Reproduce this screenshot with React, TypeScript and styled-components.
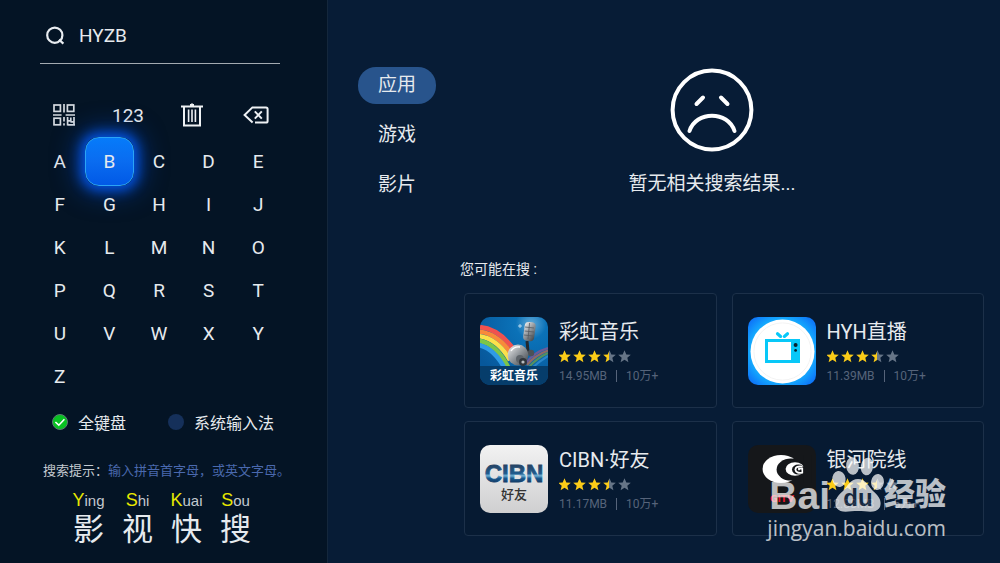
import React, { useState } from 'react';
import styled, { createGlobalStyle, css } from 'styled-components';

const latin = `Roboto, 'Noto Sans CJK SC', sans-serif`;

const letters = 'ABCDEFGHIJKLMNOPQRSTUVWXYZ'.split('');
const tabs = ['应用', '游戏', '影片'];
const brand = [
	{ head: 'Y', tail: 'ing', word: '影' },
	{ head: 'S', tail: 'hi', word: '视' },
	{ head: 'K', tail: 'uai', word: '快' },
	{ head: 'S', tail: 'ou', word: '搜' },
];
const apps = [
	{ title: '彩虹音乐', size: '14.95MB', count: '10万+', icon: <RainbowIcon /> },
	{ title: 'HYH直播', size: '11.39MB', count: '10万+', icon: <TvIcon /> },
	{ title: 'CIBN·好友', size: '11.17MB', count: '10万+', icon: <CibnIcon /> },
	{ title: '银河院线', size: '12.88MB', count: '5万+', icon: <GitvIcon /> },
];

function App() {
	const [keyword, setKeyword] = useState('HYZB');
	const [focused, setFocused] = useState('B');
	const [mode, setMode] = useState('full');
	const [tab, setTab] = useState(tabs[0]);

	const press = (letter: string) => {
		setFocused(letter);
		setKeyword(keyword + letter);
	};

	return (
		<Page>
			<GlobalStyle />
			<Sidebar>
				<SearchBox>
					<SearchIcon />
					<SearchInput
						aria-label="搜索"
						value={keyword}
						onChange={(e) => setKeyword(e.target.value)}
					/>
				</SearchBox>
				<Tools>
					<Tool aria-label="二维码">
						<QrIcon />
					</Tool>
					<Tool>123</Tool>
					<Tool aria-label="清空" onClick={() => setKeyword('')}>
						<TrashIcon />
					</Tool>
					<Tool aria-label="删除" onClick={() => setKeyword(keyword.slice(0, -1))}>
						<BackspaceIcon />
					</Tool>
				</Tools>
				<Keyboard>
					{letters.map((letter) => (
						<Key key={letter} $active={letter === focused} onClick={() => press(letter)}>
							<span>{letter}</span>
						</Key>
					))}
				</Keyboard>
				<Modes>
					<Mode>
						<Radio
							type="radio"
							name="mode"
							checked={mode === 'full'}
							onChange={() => setMode('full')}
						/>
						{mode === 'full' && <Tick />}
						全键盘
					</Mode>
					<Mode>
						<Radio
							type="radio"
							name="mode"
							checked={mode === 'system'}
							onChange={() => setMode('system')}
						/>
						{mode === 'system' && <Tick />}
						系统输入法
					</Mode>
				</Modes>
				<Hint>
					搜索提示：<em>输入拼音首字母，或英文字母。</em>
				</Hint>
				<Brand>
					{brand.map((item) => (
						<div key={item.word}>
							<Pinyin>
								<b>{item.head}</b>
								{item.tail}
							</Pinyin>
							<Word>{item.word}</Word>
						</div>
					))}
				</Brand>
			</Sidebar>
			<Main>
				<Nav>
					{tabs.map((name) => (
						<Tab key={name} $active={name === tab} onClick={() => setTab(name)}>
							{name}
						</Tab>
					))}
				</Nav>
				<Content>
					<Empty>
						<SadFace />
						<p>暂无相关搜索结果...</p>
					</Empty>
					<Suggest>
						<SuggestTitle>您可能在搜 :</SuggestTitle>
						<Cards>
							{apps.map((app) => (
								<Card key={app.title} href="#">
									{app.icon}
									<Info>
										<Title>{app.title}</Title>
										<Stars />
										<Meta>
											<span>{app.size}</span>
											<span>{app.count}</span>
										</Meta>
									</Info>
								</Card>
							))}
						</Cards>
					</Suggest>
				</Content>
			</Main>
			<Watermark>
				<WatermarkLogo>
					<span>Bai</span>
					<Paw />
					<strong>经验</strong>
				</WatermarkLogo>
				<WatermarkUrl>jingyan.baidu.com</WatermarkUrl>
			</Watermark>
		</Page>
	);
}

function SearchIcon() {
	return (
		<svg width="20" height="20" viewBox="0 0 20 20" fill="none" stroke="#e8ecf0" strokeWidth="2.2">
			<circle cx="8.8" cy="9.2" r="7.6" />
			<path d="M13 13.6L17.4 17.6" />
		</svg>
	);
}

function QrIcon() {
	return (
		<svg width="22" height="22" viewBox="0 0 22 22" fill="none" stroke="#d5dae0" strokeWidth="1.7">
			<rect x="1" y="1" width="6.4" height="6.4" />
			<rect x="14.4" y="1" width="6.4" height="6.4" />
			<rect x="1" y="14.2" width="6.4" height="6.6" />
			<path d="M11 0V8.6M0 11H8.6M12.6 11H22M11 13V17.4M11 19.2V21.4M14.6 13V21.4M14.6 16.8H17.8V13.4M21 13V21.6M14.6 20.8H22M17.4 17.8H21" />
		</svg>
	);
}

function TrashIcon() {
	return (
		<svg width="22" height="24" viewBox="0 0 22 24" fill="none" stroke="#eef1f4" strokeWidth="2">
			<path d="M0 3.6H22M9 2H13M11 0.4V3M3 4V22.4H19V4" />
			<path d="M7.6 6.6V19M11 6.6V19M14.4 6.6V19" strokeWidth="1.6" />
		</svg>
	);
}

function BackspaceIcon() {
	return (
		<svg width="26" height="18" viewBox="0 0 26 18" fill="none" stroke="#eef1f4" strokeWidth="2">
			<path d="M9.6 16.4L1.6 9L9.4 1.4H23Q24.6 1.4 24.6 3V15Q24.6 16.6 23 16.6H12" />
			<path d="M11.8 5.4L18.8 12.6M18.8 5.4L11.8 12.6" />
		</svg>
	);
}

function Tick() {
	return (
		<TickMark viewBox="0 0 16 16" fill="none" stroke="#fff" strokeWidth="1.6">
			<path d="M3.4 8L6.8 11.2L12.4 5.2" />
		</TickMark>
	);
}

function SadFace() {
	return (
		<svg width="84" height="84" viewBox="0 0 84 84" fill="none" stroke="#fff" strokeWidth="4" strokeLinecap="round">
			<circle cx="42" cy="42" r="39.4" />
			<path d="M26.5 36L33 29.5M51 29.5L57.5 36M19.5 63C26 42.5 58 42.5 64.5 63" />
		</svg>
	);
}

const star = 'M6.5 0.2L8.3 4.5L12.8 4.8L9.3 7.8L10.4 12.2L6.5 9.8L2.6 12.2L3.7 7.8L0.2 4.8L4.7 4.5Z';

function Stars() {
	return (
		<svg width="73" height="20" viewBox="1 -4 73 20" role="img" aria-label="3.5">
			<defs>
				<linearGradient id="half">
					<stop offset="0.5" stopColor="#fbcc18" />
					<stop offset="0.5" stopColor="#667587" />
				</linearGradient>
			</defs>
			{[0, 1, 2, 3, 4].map((i) => (
				<path
					key={i}
					d={star}
					transform={`translate(${i * 15} 0)`}
					fill={i < 3 ? '#fbcc18' : i === 3 ? 'url(#half)' : '#667587'}
				/>
			))}
		</svg>
	);
}

function RainbowIcon() {
	return (
		<AppIcon viewBox="0 0 68 68">
			<defs>
				<radialGradient id="sky" cx="0.75" cy="0.1" r="0.9">
					<stop offset="0" stopColor="#5fa9d8" />
					<stop offset="0.25" stopColor="#0b72b8" />
					<stop offset="1" stopColor="#07589b" />
				</radialGradient>
				<linearGradient id="metal" x1="0" y1="0" x2="1" y2="1">
					<stop offset="0" stopColor="#f4f4f4" />
					<stop offset="0.5" stopColor="#8f9499" />
					<stop offset="1" stopColor="#3a3f45" />
				</linearGradient>
			</defs>
			<rect width="68" height="68" fill="url(#sky)" />
			<g fill="none" strokeWidth="4.6">
				<path d="M-2 10Q20 11 36 36" stroke="#f0524f" />
				<path d="M-2 14.5Q18 16 32 38" stroke="#f98a3a" />
				<path d="M-2 19Q17 21 30 43" stroke="#fbe14a" />
				<path d="M-2 23.5Q16 26 28 50" stroke="#7cc648" />
				<path d="M-2 28Q14 31 25 52" stroke="#2f9be6" />
			</g>
			<g fill="none" strokeWidth="2.2">
				<path d="M46 46Q54 35 68 31" stroke="#6c5a98" />
				<path d="M47 48Q55 38 68 33.5" stroke="#8f6a66" />
				<path d="M49 50Q57 41 68 36" stroke="#55905f" />
				<path d="M52 51Q60 44 68 39" stroke="#2b86c8" />
			</g>
			<path d="M47 24L48 34L44 42" stroke="#23282e" strokeWidth="3" fill="none" />
			<circle cx="51" cy="36" r="3.2" fill="#4b5157" />
			<rect x="44" y="5" width="11" height="19" rx="4" fill="url(#metal)" transform="rotate(8 49 14)" />
			<path d="M45 10L54 11M44.6 14L54 15M44 18L53 19M49.6 6L48 22" stroke="#555b61" strokeWidth="0.8" />
			<circle cx="38" cy="38" r="10.4" fill="url(#metal)" />
			<path d="M31 34Q34 29 40 30" stroke="#fff" strokeWidth="1.4" fill="none" />
			<circle cx="40" cy="42" r="4" fill="#5d6369" />
			<circle cx="43" cy="45" r="4" fill="#30353b" />
			<circle cx="43" cy="45" r="1.6" fill="#b8bcc0" />
			<path d="M40 7V11M38 9H42" stroke="#d8ecf8" strokeWidth="0.8" />
			<rect y="49" width="68" height="19" fill="#063d6b" />
			<text x="34" y="63" textAnchor="middle" fontSize="12" fontWeight="700" fill="#fff">
				彩虹音乐
			</text>
		</AppIcon>
	);
}

function TvIcon() {
	return (
		<AppIcon viewBox="0 0 68 68">
			<defs>
				<radialGradient id="tv" r="0.7">
					<stop offset="0.6" stopColor="#16b8ff" />
					<stop offset="1" stopColor="#0b62f6" />
				</radialGradient>
			</defs>
			<rect width="68" height="68" fill="url(#tv)" />
			<circle cx="34.5" cy="34.5" r="32" fill="#fff" />
			<circle cx="34.5" cy="34.5" r="28.6" fill="none" stroke="#f3f3f3" />
			<path d="M29.5 16.8L32.6 19.4M39.5 16.8L36.4 19.4" stroke="#08c8f8" strokeWidth="3.2" fill="none" strokeLinecap="round" />
			<rect x="17" y="22" width="35" height="24" fill="#08c8f8" />
			<rect x="20" y="25" width="23" height="18" fill="#fff" />
			<circle cx="47.6" cy="28" r="2" fill="#06222e" />
			<circle cx="47.6" cy="33.4" r="1.4" fill="#06222e" />
		</AppIcon>
	);
}

function CibnIcon() {
	return (
		<AppIcon viewBox="0 0 68 68">
			<defs>
				<linearGradient id="silver" x1="0" y1="0" x2="0" y2="1">
					<stop offset="0" stopColor="#f2f2f2" />
					<stop offset="1" stopColor="#cfcfd0" />
				</linearGradient>
				<linearGradient id="cibn" gradientUnits="userSpaceOnUse" x1="0" y1="19" x2="0" y2="38">
					<stop offset="0" stopColor="#27405f" />
					<stop offset="0.5" stopColor="#1f5b8d" />
					<stop offset="0.62" stopColor="#6fb0d4" />
					<stop offset="0.75" stopColor="#17598f" />
					<stop offset="1" stopColor="#15365f" />
				</linearGradient>
			</defs>
			<rect width="68" height="68" fill="url(#silver)" />
			<text
				x="34"
				y="37"
				textAnchor="middle"
				fontSize="24"
				fontFamily="'Liberation Sans', sans-serif"
				fontWeight="700"
				fill="url(#cibn)"
				stroke="url(#cibn)"
				strokeWidth="0.8"
			>
				CIBN
			</text>
			<text x="34" y="54" textAnchor="middle" fontSize="13" fontWeight="500" fill="#333">
				好友
			</text>
		</AppIcon>
	);
}

function GitvIcon() {
	return (
		<AppIcon viewBox="0 0 68 68">
			<rect width="68" height="68" fill="#15171a" />
			<ellipse cx="33" cy="24" rx="18.4" ry="14" fill="#fff" />
			<ellipse cx="43" cy="24.6" rx="14.4" ry="11" fill="#15171a" />
			<ellipse cx="47" cy="24" rx="9.4" ry="6.8" fill="#fff" />
			<ellipse cx="50.4" cy="24.6" rx="6.4" ry="5" fill="#15171a" />
			<path d="M54.6 21.6Q47.6 20.6 47.4 24.6Q48 28.6 54.4 27.6V23.6H51V25.2" fill="none" stroke="#fff" strokeWidth="1.8" />
			<rect x="55.4" y="10" width="8" height="28" fill="#15171a" />
			<text x="34" y="57" textAnchor="middle" fontSize="9" fontFamily="'DejaVu Sans', sans-serif" fontWeight="700" fill="#e8122c">
				GITV
			</text>
		</AppIcon>
	);
}

function Paw() {
	return (
		<svg width="54" height="58" viewBox="0 0 54 58">
			<g fill="#fff">
				<ellipse cx="9" cy="23" rx="6.6" ry="8" transform="rotate(-8 9 23)" />
				<ellipse cx="22.5" cy="10" rx="6.4" ry="8.8" transform="rotate(-6 22.5 10)" />
				<ellipse cx="37" cy="10.5" rx="6.2" ry="8.8" transform="rotate(10 37 10.5)" />
				<ellipse cx="47.5" cy="26" rx="6.4" ry="8" transform="rotate(8 47.5 26)" />
				<path d="M28 23C36 23 38 30 43 35C49 40 52 45 50 51C46 58 38 55 28 55C18 55 10 58 6 51C4 45 7 40 13 35C18 30 20 23 28 23Z" />
			</g>
			<text x="28" y="50" textAnchor="middle" fontSize="24" fontFamily="'Liberation Sans', sans-serif" fontWeight="700" fill="#1a2c44">
				du
			</text>
		</svg>
	);
}

const GlobalStyle = createGlobalStyle`
	* {
		box-sizing: border-box;
	}
	body {
		margin: 0;
		background: #071c36;
		color: #e6eaee;
		font-family: ${latin};
	}
	button,
	input {
		border: 0;
		padding: 0;
		background: none;
		color: inherit;
		font: inherit;
		outline: none;
	}
	button {
		cursor: pointer;
	}
	p {
		margin: 0;
	}
	svg {
		display: block;
		flex-shrink: 0;
	}
`;

const Page = styled.div`
	position: relative;
	display: grid;
	grid-template-columns: 328px 1fr;
	min-height: 100vh;
`;

const Sidebar = styled.aside`
	padding: 8px 40px 16px 36px;
	background: #041425;
	border-right: 1px solid #14273c;
`;

const SearchBox = styled.div`
	display: flex;
	align-items: center;
	gap: 13px;
	height: 56px;
	margin: 0 7px 28px 4px;
	padding-left: 6px;
	border-bottom: 1px solid #a3aab1;
`;

const SearchInput = styled.input`
	flex: 1;
	min-width: 0;
	font-size: 19px;
`;

const Tools = styled.div`
	display: grid;
	grid-template-columns: repeat(4, 64px);
	height: 46px;
	margin: 0 -4px 2px;
`;

const Tool = styled.button`
	display: flex;
	align-items: center;
	justify-content: center;
	font-size: 19px;
`;

const Keyboard = styled.div`
	display: grid;
	grid-template-columns: repeat(5, 1fr);
	grid-auto-rows: 43px;
	margin: 0 4px 1px -1px;
`;

const Key = styled.button<{ $active: boolean }>`
	position: relative;
	font-size: 19px;
	& > span {
		position: relative;
	}
	${(props) =>
		props.$active &&
		css`
			&::before {
				content: '';
				position: absolute;
				inset: -3px 0;
				border: 1px solid #2ba4f5;
				border-radius: 14px;
				background: linear-gradient(#067bfa, #0a6cf0 50%, #0159e6);
				box-shadow: 0 0 12px 4px #0352e0, 0 0 24px 8px rgba(3, 80, 216, 0.5);
			}
		`}
`;

const Modes = styled.div`
	display: grid;
	grid-template-columns: 116px 1fr;
	height: 46px;
	padding-left: 16px;
`;

const Mode = styled.label`
	position: relative;
	display: flex;
	align-items: center;
	gap: 10px;
	font-size: 16px;
	white-space: nowrap;
`;

const Radio = styled.input`
	appearance: none;
	width: 16px;
	height: 16px;
	margin: 0;
	border-radius: 50%;
	background: #15305a;
	&:checked {
		border: 1px solid #5d7a72;
		background: #08c222;
	}
`;

const TickMark = styled.svg`
	position: absolute;
	left: 0;
	width: 16px;
	height: 16px;
`;

const Hint = styled.p`
	margin: 16px 0 0 7px;
	font-size: 13px;
	line-height: 20px;
	white-space: nowrap;
	color: #c3c9d0;
	em {
		font-style: normal;
		color: #4a69ae;
	}
`;

const Brand = styled.div`
	display: grid;
	grid-template-columns: repeat(4, 49px);
	margin: 8px 0 0 28px;
	text-align: center;
`;

const Pinyin = styled.div`
	font-family: 'Liberation Sans', sans-serif;
	font-size: 15px;
	line-height: 22px;
	color: #c3c9d0;
	b {
		font-size: 18px;
		font-weight: 400;
		color: #e8e800;
	}
`;

const Word = styled.div`
	font-size: 31px;
	line-height: 36px;
`;

const Main = styled.main`
	display: flex;
	gap: 4px;
	padding: 67px 16px 24px 30px;
`;

const Nav = styled.nav`
	display: flex;
	flex-direction: column;
	gap: 13px;
`;

const Tab = styled.button<{ $active: boolean }>`
	width: 78px;
	height: 37px;
	padding-bottom: 6px;
	border-radius: 18px;
	font-size: 19px;
	background: ${(props) => (props.$active ? '#28548c' : 'none')};
`;

const Content = styled.div`
	flex: 1;
	min-width: 0;
`;

const Empty = styled.div`
	display: flex;
	flex-direction: column;
	align-items: center;
	gap: 18px;
	padding-top: 1px;
	font-size: 19px;
	line-height: 28px;
`;

const Suggest = styled.section`
	padding: 61px 0 0 20px;
`;

const SuggestTitle = styled.p`
	font-size: 14px;
	line-height: 20px;
	margin-bottom: 14px;
`;

const Cards = styled.div`
	display: grid;
	grid-template-columns: 1fr 1fr;
	gap: 13px 15px;
	padding-left: 4px;
`;

const Card = styled.a`
	display: flex;
	align-items: center;
	gap: 11px;
	height: 115px;
	padding: 0 15px;
	border: 1px solid #1c3049;
	border-radius: 4px;
	background: #061a32;
	color: inherit;
	text-decoration: none;
`;

const AppIcon = styled.svg`
	width: 68px;
	height: 68px;
	border-radius: 10px;
`;

const Info = styled.div`
	padding-top: 2px;
`;

const Title = styled.div`
	font-size: 20px;
	line-height: 28px;
`;

const Meta = styled.div`
	display: flex;
	align-items: center;
	font-size: 12px;
	line-height: 20px;
	color: #56647a;
	span + span {
		margin-left: 9px;
		padding-left: 9px;
		border-left: 1px solid #56647a;
		line-height: 12px;
	}
`;

const Watermark = styled.div`
	position: absolute;
	right: 54px;
	bottom: 22px;
	color: #fff;
	opacity: 0.72;
	pointer-events: none;
`;

const WatermarkLogo = styled.div`
	display: flex;
	align-items: flex-end;
	justify-content: flex-end;
	font-family: 'Liberation Sans', 'Noto Sans CJK SC', sans-serif;
	font-weight: 700;
	span {
		font-size: 39px;
		line-height: 37px;
	}
	strong {
		font-size: 31px;
		line-height: 38px;
	}
`;

const WatermarkUrl = styled.div`
	font-family: 'Open Sans', 'Noto Sans', sans-serif;
	font-size: 21px;
	font-weight: 500;
	line-height: 28px;
`;

export default App;
